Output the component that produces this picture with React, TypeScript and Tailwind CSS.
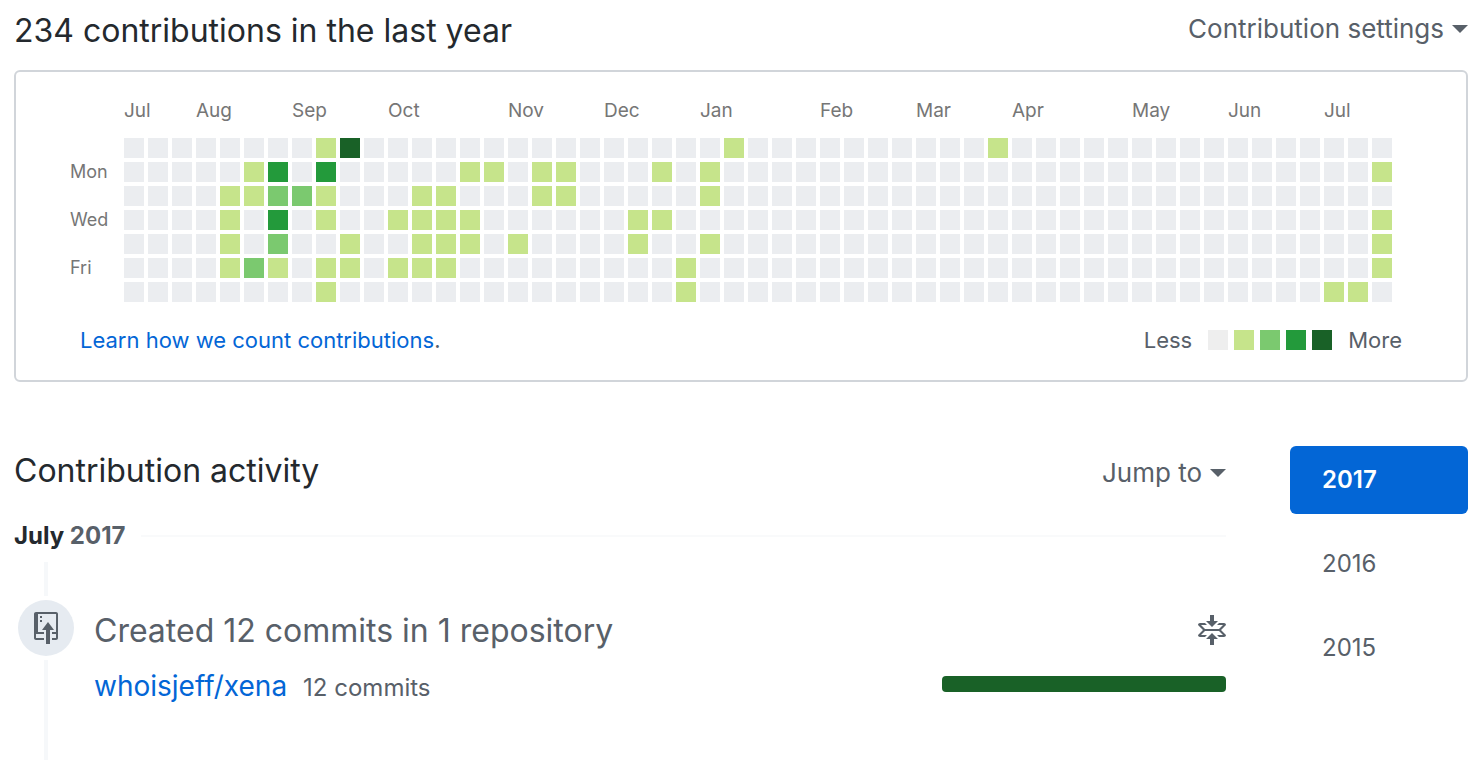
const LEVELS = ['bg-[#ebedf0]', 'bg-[#c6e48b]', 'bg-[#7bc96f]', 'bg-[#239a3b]', 'bg-[#196127]'];
const LEGEND = ['bg-[#eeeeee]', 'bg-[#c6e48b]', 'bg-[#7bc96f]', 'bg-[#239a3b]', 'bg-[#196127]'];

const WEEKS = 53;

// One record per weekday, Sunday first: week index -> activity level.
const DAYS: Record<number, number>[] = [
  { 8: 1, 9: 4, 25: 1, 36: 1 },
  { 5: 1, 6: 3, 8: 3, 14: 1, 15: 1, 17: 1, 18: 1, 22: 1, 24: 1, 52: 1 },
  { 4: 1, 5: 1, 6: 2, 7: 2, 8: 1, 12: 1, 13: 1, 17: 1, 18: 1, 24: 1 },
  { 4: 1, 6: 3, 8: 1, 11: 1, 12: 1, 13: 1, 14: 1, 21: 1, 22: 1, 52: 1 },
  { 4: 1, 6: 2, 9: 1, 12: 1, 13: 1, 14: 1, 16: 1, 21: 1, 24: 1, 52: 1 },
  { 4: 1, 5: 2, 6: 1, 8: 1, 9: 1, 11: 1, 12: 1, 13: 1, 23: 1, 52: 1 },
  { 8: 1, 23: 1, 50: 1, 51: 1 },
];

const DAY_LABELS = ['', 'Mon', '', 'Wed', '', 'Fri', ''];

// Month label and the number of weeks it spans.
const MONTHS: [string, number][] = [
  ['Jul', 3], ['Aug', 4], ['Sep', 4], ['Oct', 5], ['Nov', 4], ['Dec', 4], ['Jan', 5],
  ['Feb', 4], ['Mar', 4], ['Apr', 5], ['May', 4], ['Jun', 4], ['Jul', 3],
];

function Caret() {
  return (
    <svg width="16" height="8" viewBox="0 0 16 8" fill="currentColor" aria-hidden="true">
      <path d="M0 0h16L8 8z" />
    </svg>
  );
}

function Calendar() {
  return (
    <div className="flex pl-[54px]">
      <div className="flex w-[54px] shrink-0 flex-col gap-1 pt-10 text-lg text-[#767676]">
        {DAY_LABELS.map((label, i) => (
          <div key={i} className="h-5 leading-5">{label}</div>
        ))}
      </div>
      <div>
        <div className="flex h-10 text-[19px] leading-[26px] text-[#767676]">
          {MONTHS.map(([name, weeks], i) => (
            <div key={i} className="shrink-0" style={{ width: weeks * 24 }}>{name}</div>
          ))}
        </div>
        <div className="flex flex-col gap-1">
          {DAYS.map((day, d) => (
            <div key={d} className="flex gap-1">
              {Array.from({ length: WEEKS }, (_, w) => (
                <div key={w} className={`size-5 shrink-0 ${LEVELS[day[w] ?? 0]}`} />
              ))}
            </div>
          ))}
        </div>
      </div>
    </div>
  );
}

export default function App() {
  return (
    <main className="overflow-hidden bg-white pr-3 pl-[14px] font-['Inter',sans-serif] text-[#586069]">
      <header className="flex h-[70px] items-start justify-between pt-2">
        <h2 className="text-[32px] leading-[46px] text-[#24292e]">234 contributions in the last year</h2>
        <button type="button" className="flex items-center gap-2 text-[26px] leading-[42px]">
          Contribution settings
          <Caret />
        </button>
      </header>

      <section className="rounded-md border-2 border-[#d1d5da] pt-[26px] pb-6">
        <Calendar />
        <div className="mt-[22px] flex items-center justify-between pr-16 pl-16 text-[22px] leading-8">
          <p>
            <a href="#learn" className="text-[#0366d6]">Learn how we count contributions</a>.
          </p>
          <div className="flex items-center gap-4">
            <span>Less</span>
            <div className="flex gap-[6px]">
              {LEGEND.map((color) => (
                <div key={color} className={`size-5 ${color}`} />
              ))}
            </div>
            <span>More</span>
          </div>
        </div>
      </section>

      <div className="mt-16 flex gap-16">
        <section className="min-w-0 flex-1">
          <div className="flex h-[50px] items-start justify-between">
            <h2 className="text-[32px] leading-[50px] text-[#24292e]">Contribution activity</h2>
            <button type="button" className="flex items-center gap-2 text-[26px] leading-[54px]">
              Jump to
              <Caret />
            </button>
          </div>

          <h3 className="mt-5 flex items-center gap-4 text-2xl leading-10 font-bold">
            <span>
              <span className="text-[#24292e]">July</span> 2017
            </span>
            <span className="h-[2px] flex-1 bg-[#f9fafb]" />
          </h3>

          <div className="mt-[6px] flex gap-5">
            <div className="ml-1 flex w-14 shrink-0 flex-col items-center gap-1">
              <div className="h-[34px] w-1 bg-[#f6f8fa]" />
              <div className="flex size-14 items-center justify-center rounded-full bg-[#e6ebf1]">
                <svg width="24" height="32" viewBox="0 0 12 16" fill="currentColor" aria-hidden="true">
                  <path d="M4 3H3V2h1v1zM3 5h1V4H3v1zm4 0L4 9h2v7h2V9h2L7 5zm4-5H1C.45 0 0 .45 0 1v12c0 .55.45 1 1 1h4v-1H1v-2h4v-1H2V1h9.02L11 10H9v1h2v2H9v1h2c.55 0 1-.45 1-1V1c0-.55-.45-1-1-1z" />
                </svg>
              </div>
              <div className="min-h-[100px] w-1 flex-1 bg-[#f6f8fa]" />
            </div>
            <div className="min-w-0 flex-1 pt-12">
              <button type="button" className="flex w-full items-center justify-between text-left text-[32px] leading-[42px]">
                Created 12 commits in 1 repository
                <svg width="28" height="32" viewBox="0 0 14 16" fill="currentColor" aria-hidden="true">
                  <path d="M7 9l3 3H8v3H6v-3H4l3-3zm3-6H8V0H6v3H4l3 3 3-3zm4 2c0-.55-.45-1-1-1h-2.5l-1 1h3l-2 2h-7l-2-2h3l-1-1H1c-.55 0-1 .45-1 1l2.5 2.5L0 10c0 .55.45 1 1 1h2.5l1-1h-3l2-2h7l2 2h-3l1 1H13c.55 0 1-.45 1-1l-2.5-2.5L14 5z" />
                </svg>
              </button>
              <div className="mt-[14px] flex items-center justify-between">
                <div className="flex items-baseline gap-4 leading-10">
                  <a href="#xena" className="text-[28px] text-[#0366d6]">whoisjeff/xena</a>
                  <span className="text-2xl leading-10">12 commits</span>
                </div>
                <div className="mb-[6px] h-4 w-[284px] rounded bg-[#196127]" />
              </div>
            </div>
          </div>
        </section>

        <nav className="w-[178px] shrink-0">
          <ul className="flex flex-col gap-4 text-2xl leading-9">
            <li>
              <a href="#2017" className="block rounded-md bg-[#0366d6] px-8 py-4 font-semibold text-white">2017</a>
            </li>
            <li>
              <a href="#2016" className="block px-8 py-4">2016</a>
            </li>
            <li>
              <a href="#2015" className="block px-8 py-4">2015</a>
            </li>
          </ul>
        </nav>
      </div>
    </main>
  );
}
